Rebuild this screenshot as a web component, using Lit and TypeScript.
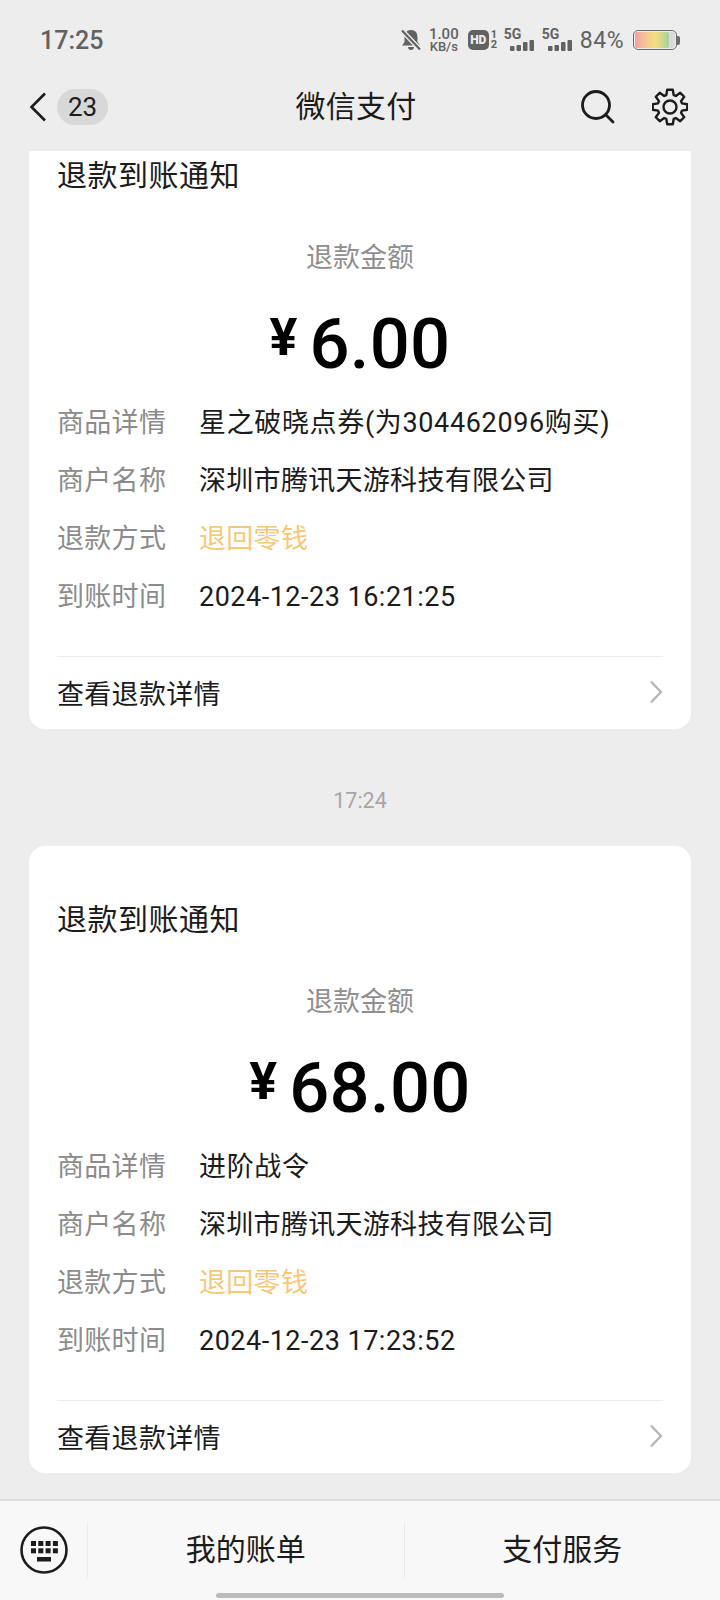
import { LitElement, css, html, svg } from 'lit';
import { customElement } from 'lit/decorators.js';

interface Refund {
  time?: string;
  amount: string;
  goods: string;
  paidAt: string;
}

const REFUNDS: Refund[] = [
  { amount: '6.00', goods: '星之破晓点券(为304462096购买)', paidAt: '2024-12-23 16:21:25' },
  { time: '17:24', amount: '68.00', goods: '进阶战令', paidAt: '2024-12-23 17:23:52' },
];

// eight rounded teeth, first one pointing up
function gearPath(cx: number, cy: number, outer: number, inner: number): string {
  const pts: string[] = [];
  for (let i = 0; i < 8; i++) {
    const a = (i * Math.PI) / 4 - Math.PI / 2;
    const steps: [number, number][] = [
      [inner, -0.3],
      [outer, -0.16],
      [outer, 0.16],
      [inner, 0.3],
    ];
    for (const [r, da] of steps) {
      const x = cx + r * Math.cos(a + da);
      const y = cy + r * Math.sin(a + da);
      pts.push(`${x.toFixed(2)} ${y.toFixed(2)}`);
    }
  }
  return `M${pts.join('L')}Z`;
}

const signal = svg`
  <rect x="0" y="6" width="4.5" height="5" rx="1"></rect>
  <rect x="6.500" y="5" width="4.500" height="6" rx="1"></rect>
  <rect x="13" y="2" width="4.500" height="9" rx="1"></rect>
  <rect x="19.500" y="0" width="4.500" height="11" rx="1"></rect>
`;

@customElement('app-root')
export class AppRoot extends LitElement {
  static override styles = css`
    :host {
      display: block;
      width: 720px;
      height: 1600px;
      background: #ededed;
      font-family: Roboto, 'Noto Sans CJK SC', sans-serif;
      color: #1c1c1c;
      overflow: hidden;
    }
    .page {
      height: 1600px;
      display: flex;
      flex-direction: column;
    }
    .status {
      height: 80px;
      flex: none;
      display: flex;
      align-items: center;
      justify-content: space-between;
      padding: 0 40px;
      color: #626262;
    }
    .clock {
      font-size: 25px;
      font-weight: 500;
    }
    .status-icons {
      display: flex;
      align-items: center;
    }
    .speed {
      margin-left: 8px;
      width: 30px;
      display: flex;
      flex-direction: column;
      align-items: center;
      font-weight: 500;
    }
    .speed b {
      font-size: 15px;
      font-weight: 500;
      line-height: 13px;
    }
    .speed span {
      font-size: 13px;
      line-height: 12px;
    }
    .hd {
      margin-left: 9px;
      width: 31px;
      display: flex;
      align-items: center;
    }
    .hd-box {
      width: 21px;
      height: 20px;
      border-radius: 5px;
      background: #626262;
      color: #ededed;
      font-size: 12px;
      font-weight: 900;
      line-height: 20px;
      text-align: center;
    }
    .hd-nums {
      flex: 1;
      display: flex;
      flex-direction: column;
      align-items: center;
      font-size: 11px;
      font-weight: 700;
      line-height: 10px;
    }
    .sim {
      margin-left: 5px;
      width: 30px;
      height: 24px;
      display: flex;
      flex-direction: column;
    }
    .sim + .sim {
      margin-left: 8px;
    }
    .sim span {
      font-size: 14px;
      font-weight: 700;
      line-height: 12px;
    }
    .sim svg {
      align-self: flex-end;
      fill: #626262;
    }
    .pct {
      margin-left: 8px;
      font-size: 23px;
      letter-spacing: 0.5px;
    }
    .battery {
      margin-left: 9px;
      display: flex;
      align-items: center;
    }
    .battery-body {
      width: 44px;
      height: 20px;
      box-sizing: border-box;
      border: 1.5px solid #6c6c6c;
      border-radius: 5px;
      padding: 1px;
      background: #dadada;
      background-clip: content-box;
    }
    .battery-fill {
      height: 100%;
      border-radius: 2px;
      background: linear-gradient(90deg, #f2a0a4, #f3cf8c 40%, #f1de7f 62%, #a8cfa4 100%);
    }
    .battery-nub {
      width: 3px;
      height: 9px;
      background: #6c6c6c;
      border-radius: 0 2px 2px 0;
    }
    .nav {
      height: 54px;
      flex: none;
      margin-bottom: 17px;
      position: relative;
      display: flex;
      align-items: center;
      justify-content: space-between;
      padding: 0 32px 0 29px;
    }
    .nav-left,
    .nav-right {
      display: flex;
      align-items: center;
    }
    .badge {
      margin-left: 10px;
      width: 51px;
      height: 36px;
      border-radius: 18px;
      background: #d8d8d8;
      font-size: 26px;
      line-height: 36px;
      text-align: center;
    }
    .nav-title {
      position: absolute;
      left: 0;
      right: 8px;
      text-align: center;
      font-size: 30px;
      line-height: 40px;
      letter-spacing: 0.3px;
    }
    .nav-right svg + svg {
      margin-left: 37px;
    }
    .feed {
      flex: 1;
      min-height: 0;
      overflow: hidden;
      display: flex;
      flex-direction: column;
      padding: 0 29px;
    }
    .card {
      flex: none;
      height: 627px;
      box-sizing: border-box;
      background: #fff;
      border-radius: 16px;
      padding: 54px 28px 0;
      display: flex;
      flex-direction: column;
    }
    .card.scrolled {
      margin-top: -49px;
    }
    .card-title {
      font-size: 30px;
      line-height: 40px;
      letter-spacing: 0.5px;
    }
    .amount-label {
      margin-top: 42px;
      font-size: 27px;
      line-height: 40px;
      color: #8f8f8f;
      text-align: center;
    }
    .amount {
      margin-top: 24px;
      height: 84px;
      display: flex;
      align-items: center;
      justify-content: center;
      color: #000;
    }
    .yen {
      font-size: 52px;
      font-weight: 700;
      margin-right: 12px;
      transform: translateY(-7px);
    }
    .num {
      font-size: 70.5px;
      font-weight: 500;
      letter-spacing: 0.3px;
    }
    .rows {
      margin-top: 5px;
    }
    .row {
      height: 58px;
      display: flex;
      align-items: center;
      font-size: 27px;
      letter-spacing: 0.3px;
    }
    .row-key {
      width: 142px;
      flex: none;
      color: #8c8c8c;
    }
    .row-val.goods {
      letter-spacing: 0.65px;
    }
    .row-val.date {
      letter-spacing: 0.5px;
      padding-top: 5px;
    }
    .row-val.money {
      color: #f7c877;
    }
    .rule {
      margin-top: 33px;
      height: 1px;
      background: #ececec;
    }
    .link {
      height: 70px;
      display: flex;
      align-items: center;
      justify-content: space-between;
      font-size: 27px;
      letter-spacing: 0.3px;
    }
    .stamp {
      flex: none;
      height: 117px;
      box-sizing: border-box;
      padding-top: 56px;
      line-height: 32px;
      text-align: center;
      font-size: 21.5px;
      color: #a6a6a6;
    }
    .bottom {
      height: 101px;
      flex: none;
      box-sizing: border-box;
      border-top: 2px solid #dedede;
      background: #f8f8f8;
      display: flex;
      flex-direction: column;
      align-items: center;
    }
    .tabs {
      width: 100%;
      flex: none;
      height: 92px;
      box-sizing: border-box;
      padding-top: 21px;
      display: flex;
      align-items: flex-start;
    }
    .kbd {
      width: 87px;
      height: 56px;
      flex: none;
      display: flex;
      align-items: center;
      justify-content: center;
    }
    .tab {
      flex: 1;
      height: 56px;
      border-left: 1px solid #ebebeb;
      font-size: 30px;
      line-height: 56px;
      text-align: center;
    }
    .home-pill {
      width: 288px;
      height: 5px;
      border-radius: 3px;
      background: #bbbbbb;
    }
  `;

  private renderCard(r: Refund, scrolled: boolean) {
    return html`
      <section class="card ${scrolled ? 'scrolled' : ''}">
        <div class="card-title">退款到账通知</div>
        <div class="amount-label">退款金额</div>
        <div class="amount"><span class="yen">¥</span><span class="num">${r.amount}</span></div>
        <div class="rows">
          <div class="row"><span class="row-key">商品详情</span><span class="row-val goods">${r.goods}</span></div>
          <div class="row"><span class="row-key">商户名称</span><span class="row-val">深圳市腾讯天游科技有限公司</span></div>
          <div class="row"><span class="row-key">退款方式</span><span class="row-val money">退回零钱</span></div>
          <div class="row"><span class="row-key">到账时间</span><span class="row-val date">${r.paidAt}</span></div>
        </div>
        <div class="rule"></div>
        <div class="link">
          <span>查看退款详情</span>
          <svg width="14" height="24" viewBox="0 0 14 24" fill="none" stroke="#b4b4b4" stroke-width="2.2">
            <path d="M2 1.5 12 12 2 22.5"></path>
          </svg>
        </div>
      </section>
    `;
  }

  override render() {
    return html`
      <div class="page">
        <div class="status">
          <span class="clock">17:25</span>
          <div class="status-icons">
            <svg width="20" height="22" viewBox="0 0 20 22" fill="#626262">
              <path d="M10 1c-4.500 0-6.500 3-6.500 7v5l-2.500 3.500h18L16.500 13V8c0-4-2-7-6.500-7zM7 18a3 3 0 0 0 6 0z"></path>
              <path d="M0.500 1 19.500 21" stroke="#ededed" stroke-width="5"></path>
              <path d="M1 1.500 19 20.500" stroke="#626262" stroke-width="2.200"></path>
            </svg>
            <div class="speed"><b>1.00</b><span>KB/s</span></div>
            <div class="hd">
              <span class="hd-box">HD</span>
              <span class="hd-nums"><span>1</span><span>2</span></span>
            </div>
            <div class="sim">
              <span>5G</span>
              <svg width="24" height="11" viewBox="0 0 24 11">${signal}</svg>
            </div>
            <div class="sim">
              <span>5G</span>
              <svg width="24" height="11" viewBox="0 0 24 11">${signal}</svg>
            </div>
            <span class="pct">84%</span>
            <div class="battery">
              <div class="battery-body"><div class="battery-fill" style="width:84%"></div></div>
              <div class="battery-nub"></div>
            </div>
          </div>
        </div>

        <div class="nav">
          <div class="nav-left">
            <svg width="18" height="30" viewBox="0 0 18 30" fill="none" stroke="#1c1c1c" stroke-width="2.600">
              <path d="M16 1.500 2.500 15 16 28.500"></path>
            </svg>
            <span class="badge">23</span>
          </div>
          <div class="nav-title">微信支付</div>
          <div class="nav-right">
            <svg width="34" height="34" viewBox="0 0 34 34" fill="none" stroke="#1c1c1c" stroke-width="2.800" stroke-linecap="round">
              <circle cx="15" cy="15" r="13.500"></circle>
              <path d="M25.500 25.500 32 32"></path>
            </svg>
            <svg width="36" height="38" viewBox="0 0 36 38" fill="none" stroke="#1c1c1c" stroke-width="2.400" stroke-linejoin="round">
              <path d=${gearPath(18, 19, 17.500, 12.500)}></path>
              <circle cx="18" cy="19" r="6.500"></circle>
            </svg>
          </div>
        </div>

        <div class="feed">
          ${REFUNDS.map(
            (r, i) => html`
              ${r.time ? html`<div class="stamp">${r.time}</div>` : ''}
              ${this.renderCard(r, i === 0)}
            `,
          )}
        </div>

        <div class="bottom">
          <div class="tabs">
            <div class="kbd">
              <svg width="48" height="48" viewBox="0 0 48 48">
                <circle cx="24" cy="24" r="22.500" fill="none" stroke="#1c1c1c" stroke-width="2.600"></circle>
                <g fill="#1c1c1c">
                  ${[0, 1].map((row) =>
                    [0, 1, 2, 3].map(
                      (col) =>
                        svg`<rect x=${11 + col * 7.3} y=${15 + row * 7.3} width="5" height="5"></rect>`,
                    ),
                  )}
                  <rect x="17" y="31" width="14" height="4.500"></rect>
                </g>
              </svg>
            </div>
            <div class="tab">我的账单</div>
            <div class="tab">支付服务</div>
          </div>
          <div class="home-pill"></div>
        </div>
      </div>
    `;
  }
}

declare global {
  interface HTMLElementTagNameMap {
    'app-root': AppRoot;
  }
}
